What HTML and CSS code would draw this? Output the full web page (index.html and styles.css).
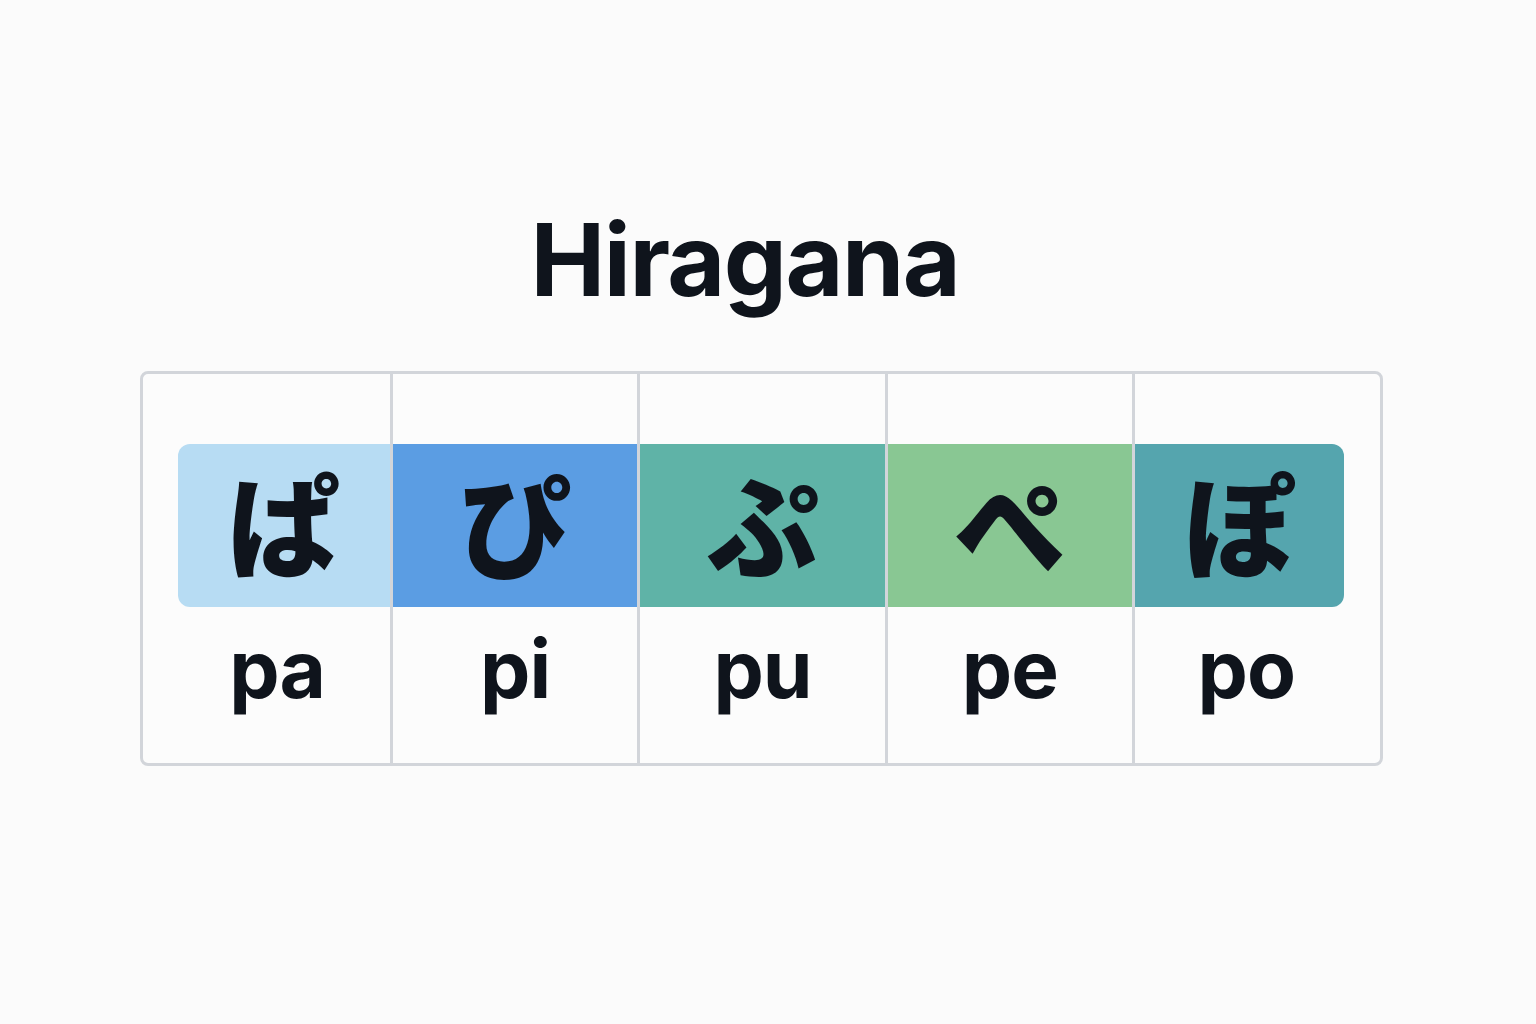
FILE: index.html
```html
<!DOCTYPE html>
<html lang="ja">
<head>
<meta charset="utf-8">
<title>Hiragana</title>
<link rel="stylesheet" href="styles.css">
</head>
<body>
<main class="page">
  <h1 class="title">Hiragana</h1>
  <div class="chart">
    <div class="cell first">
      <div class="kana k-pa">ぱ</div>
      <div class="romaji">pa</div>
    </div>
    <div class="cell">
      <div class="kana k-pi">ぴ</div>
      <div class="romaji">pi</div>
    </div>
    <div class="cell">
      <div class="kana k-pu">ぷ</div>
      <div class="romaji">pu</div>
    </div>
    <div class="cell">
      <div class="kana k-pe">ぺ</div>
      <div class="romaji">pe</div>
    </div>
    <div class="cell last">
      <div class="kana k-po">ぽ</div>
      <div class="romaji">po</div>
    </div>
  </div>
</main>
</body>
</html>
```

FILE: styles.css
```css
html, body {
  margin: 0;
  padding: 0;
  background: #fbfbfb;
}

.page {
  display: flex;
  flex-direction: column;
  align-items: center;
  padding-top: 210px;
  padding-right: 14px;
  font-family: Inter, "Noto Sans", "Noto Sans CJK JP", sans-serif;
  color: #0f141c;
}

.title {
  margin: 0 32px 61px 0;
  font-size: 100px;
  line-height: 1;
  font-weight: 700;
  letter-spacing: -1.5px;
}

.chart {
  width: 1237px;
  display: grid;
  grid-template-columns: repeat(5, 1fr);
  border: 3px solid #d2d5da;
  border-radius: 8px;
  background: #fcfcfc;
}

.cell {
  display: flex;
  flex-direction: column;
  padding-top: 70px;
  border-left: 3px solid #d2d5da;
  min-width: 0;
}

.cell.first {
  border-left: none;
}

.kana {
  height: 163px;
  box-sizing: border-box;
  padding-bottom: 10px;
  display: flex;
  align-items: center;
  justify-content: center;
  font-family: "Noto Sans CJK JP", sans-serif;
  font-weight: 900;
  font-size: 112px;
  line-height: 1;
  color: #0f141c;
}

.first .kana {
  margin-left: 35px;
  border-radius: 12px 0 0 12px;
}

.last .kana {
  margin-right: 35px;
  border-radius: 0 12px 12px 0;
}

.k-pa { background: #b7dcf3; }
.k-pi { background: #5b9de3; }
.k-pu { background: #5fb3a7; }
.k-pe { background: #89c793; }
.k-po { background: #55a5ae; }

.romaji {
  padding: 22px 0 54px;
  text-align: center;
  font-size: 80px;
  line-height: 1;
  font-weight: 700;
  letter-spacing: -1px;
}

.first .romaji {
  padding-left: 22px;
}

.last .romaji {
  padding-right: 22px;
}
```
